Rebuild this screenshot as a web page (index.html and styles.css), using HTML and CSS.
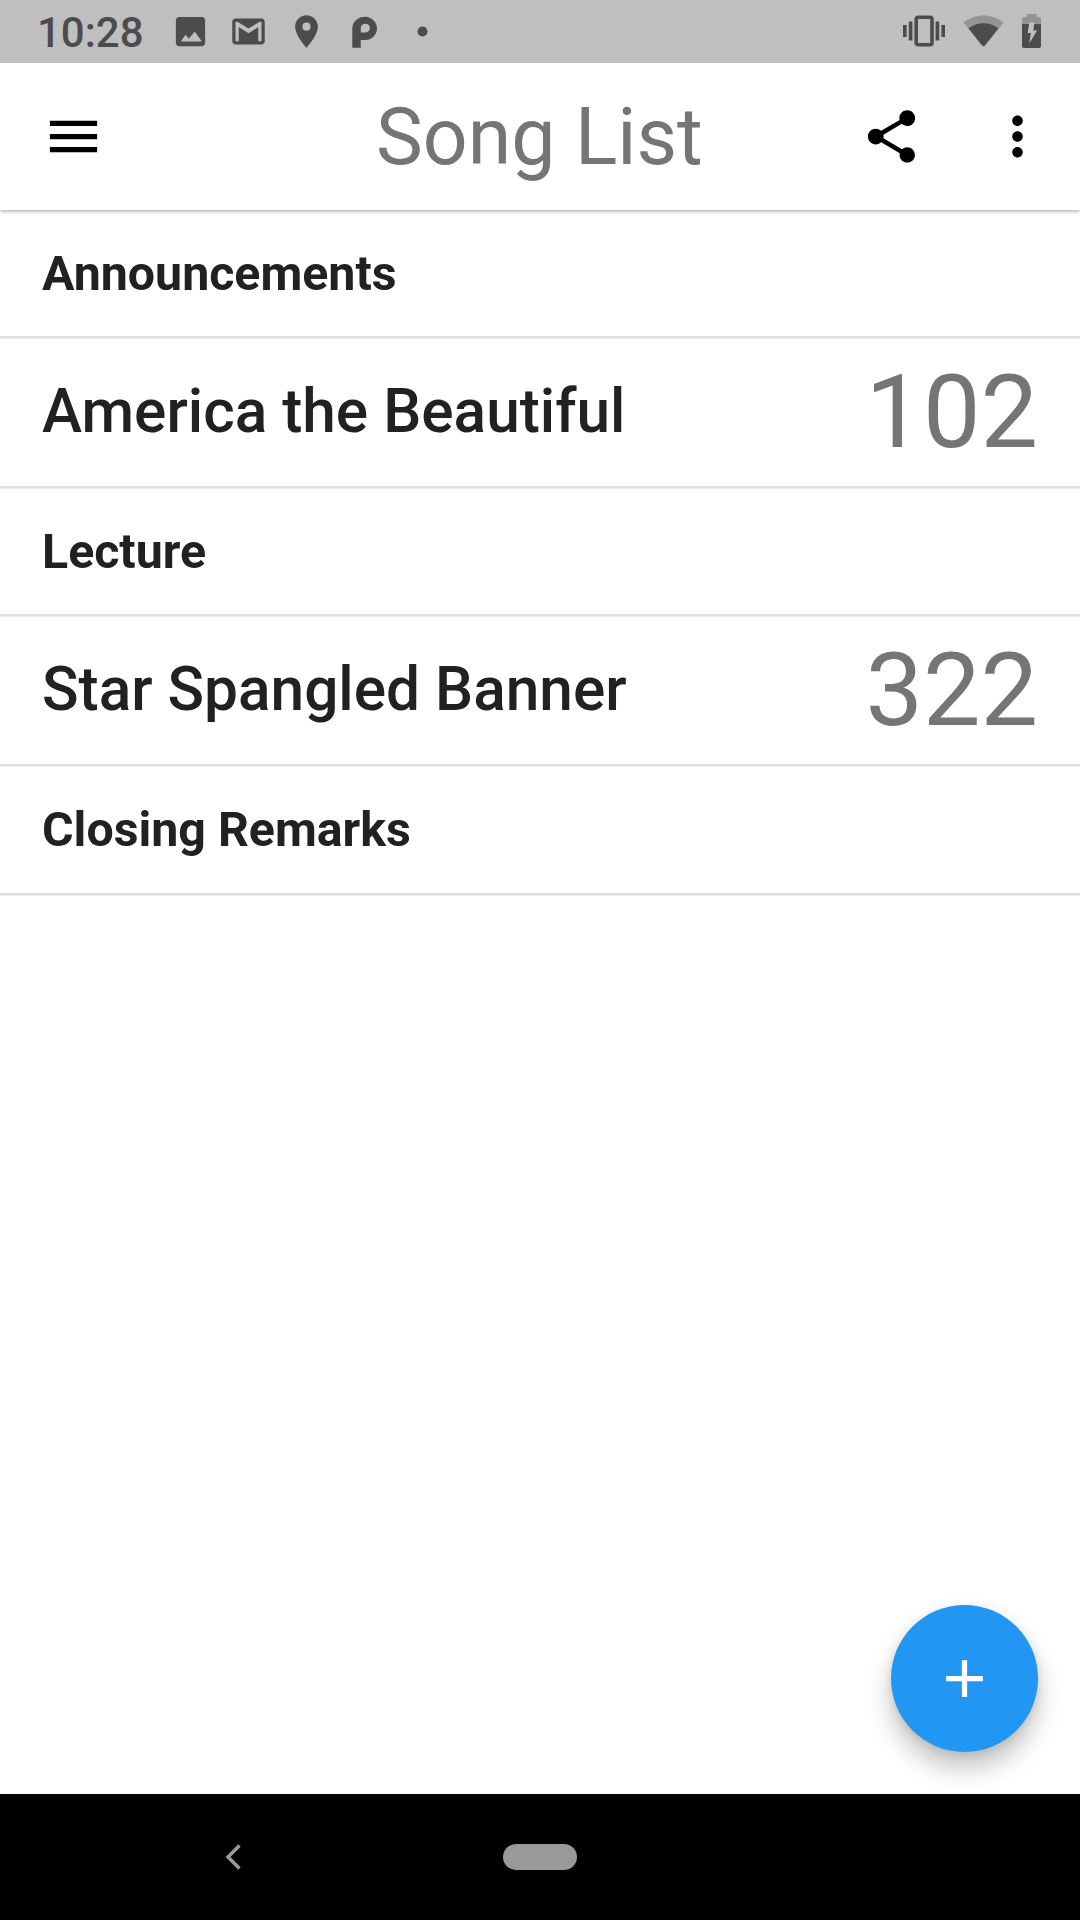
FILE: index.html
```html
<!DOCTYPE html>
<html lang="en">

<head>
    <meta charset="utf-8">
    <title>Song List</title>
    <link rel="stylesheet" href="styles.css">
</head>

<body>
    <div class="screen">
        <div class="status">
            <div class="clock">10:28</div>
            <div class="notifications">
                <svg class="icon" viewBox="0 0 24 24"><path d="M21 19V5c0-1.1-.9-2-2-2H5c-1.100 0-2 .9-2 2v14c0 1.100.9 2 2 2h14c1.100 0 2-.9 2-2zM6 18.200l3-4.200 1.900 2.400L14.600 12 19 18.200z" /></svg>
                <svg class="icon" viewBox="0 0 24 24"><path d="M20 4H4c-1.100 0-2 .9-2 2v12c0 1.100.9 2 2 2h16c1.100 0 2-.9 2-2V6c0-1.100-.9-2-2-2zm0 14h-2V9.200l-6 3.800-6-3.800V18H4V6h1.200l6.800 4.200L18.800 6H20z" /></svg>
                <svg class="icon" viewBox="0 0 24 24"><path d="M12 2C8.130 2 5 5.130 5 9c0 5.250 7 13 7 13s7-7.750 7-13c0-3.870-3.130-7-7-7zm0 9.500a2.500 2.500 0 0 1 0-5 2.500 2.500 0 0 1 0 5z" /></svg>
                <svg class="icon" viewBox="0 0 24 24"><path fill-rule="evenodd" d="M4.500 22V9.600A7.600 7.200 0 1 1 12.500 17.300H9.700V22zM9.700 12.600h2.700a2.800 2.700 0 1 0-2.700-2.700z" /></svg>
                <svg class="icon" viewBox="0 0 24 24"><circle cx="12" cy="12" r="3.100" /></svg>
            </div>
            <div class="system">
                <svg class="vibrate" viewBox="0 0 42 32"><path d="M0 10h3.600v12H0zM5.800 6.500h3.600v19H5.800zM32.600 6.500h3.600v19h-3.600zM38.400 10H42v12h-3.600z" /><rect class="line" x="13.200" y="2.200" width="15.800" height="27.600" rx="2" /></svg>
                <svg class="wifi" viewBox="0 0 41 32"><path class="faint" d="M.5 7.500C12-2 29-2 40.500 7.500L34.500 15C26 7 15 7 6.500 15z" /><path d="M5.500 13.500C14 6.500 27 6.500 35.500 13.500L22 30.500Q20.500 32 19 30.500z" /></svg>
                <svg class="battery" viewBox="0 0 19 34"><path class="faint" d="M0 10V4.500Q0 3 1.500 3H4.700V0h10v3h2.800Q19 3 19 4.500V10z" /><path d="M0 10h19v22q0 2-2 2H2q-2 0-2-2z" /><path class="bolt" d="M7.300 8.500h5.200l-1.200 8H15L7.300 29.600 8.800 19H5.700z" /></svg>
            </div>
        </div>
        <div class="appbar">
            <svg class="action" viewBox="0 0 24 24"><path d="M3 18h18v-2H3v2zm0-5h18v-2H3v2zm0-7v2h18V6H3z" /></svg>
            <div class="title">Song List</div>
            <svg class="action" viewBox="0 0 24 24"><path d="M18 16.080c-.76 0-1.440.3-1.960.77L8.910 12.700c.05-.23.09-.46.09-.7s-.04-.47-.09-.7l7.050-4.110c.54.5 1.250.81 2.040.81 1.660 0 3-1.340 3-3s-1.340-3-3-3-3 1.340-3 3c0 .24.04.47.09.7L8.040 9.810C7.500 9.310 6.790 9 6 9c-1.660 0-3 1.340-3 3s1.340 3 3 3c.79 0 1.500-.31 2.040-.81l7.120 4.160c-.05.21-.08.43-.08.65 0 1.610 1.310 2.920 2.920 2.920s2.920-1.310 2.920-2.920-1.310-2.920-2.920-2.920z" /></svg>
            <svg class="action" viewBox="0 0 24 24"><path d="M12 8c1.100 0 2-.9 2-2s-.9-2-2-2-2 .9-2 2 .9 2 2 2zm0 2c-1.100 0-2 .9-2 2s.9 2 2 2 2-.9 2-2-.9-2-2-2zm0 6c-1.100 0-2 .9-2 2s.9 2 2 2 2-.9 2-2-.9-2-2-2z" /></svg>
        </div>
        <div class="list">
            <div class="row heading">Announcements</div>
            <div class="row song">
                <div class="name">America the Beautiful</div>
                <div class="number">102</div>
            </div>
            <div class="row heading">Lecture</div>
            <div class="row song">
                <div class="name">Star Spangled Banner</div>
                <div class="number">322</div>
            </div>
            <div class="row heading">Closing Remarks</div>
        </div>
        <div class="add">
            <svg class="plus" viewBox="0 0 24 24"><path d="M19 13h-6v6h-2v-6H5v-2h6V5h2v6h6v2z" /></svg>
        </div>
        <div class="navbar">
            <svg class="back" viewBox="0 0 16 26"><path d="M14.500 1.500L3 13l11.500 11.500" /></svg>
            <div class="home"></div>
        </div>
    </div>
</body>

</html>
```
FILE: styles.css
```css
body {
    margin: 0;
    font-family: Roboto, sans-serif;
    background-color: #fff;
}

.screen {
    display: flex;
    flex-direction: column;
    position: relative;
    width: 1080px;
    height: 1920px;
    overflow: hidden;
}

.status {
    display: flex;
    align-items: center;
    box-sizing: border-box;
    height: 63px;
    padding: 0 39px 1px 37px;
    background-color: #bfbfbf;
    color: #4c4c4c;
    fill: #4c4c4c;
    z-index: 2;
}

.clock {
    width: 134px;
    font-size: 42px;
    font-weight: 500;
    line-height: 62px;
    padding-top: 3px;
}

.notifications {
    display: flex;
    gap: 19px;
}

.icon {
    width: 39px;
    height: 39px;
}

.system {
    display: flex;
    align-items: center;
    margin-left: auto;
}

.vibrate {
    width: 42px;
    height: 32px;
    margin-right: 18px;
}

.vibrate .line {
    fill: none;
    stroke: #4c4c4c;
    stroke-width: 3.600;
}

.wifi {
    width: 41px;
    height: 32px;
    margin-right: 18px;
}

.battery {
    width: 19px;
    height: 34px;
}

.faint {
    fill: #949494;
}

.bolt {
    fill: #bfbfbf;
}

.appbar {
    display: flex;
    align-items: center;
    height: 147px;
    padding: 0 31.500px 0 42px;
    background-color: #fff;
    box-shadow: 0 1px 4px rgba(0, 0, 0, .4);
    z-index: 1;
}

.action {
    width: 63px;
    height: 63px;
}

.action:last-child {
    margin-left: 63px;
}

.title {
    flex: 1;
    font-size: 78.750px;
    color: #757575;
    padding-left: 271px;
}

.list {
    flex: 1;
}

.row {
    display: flex;
    align-items: center;
    padding: 0 42px;
    color: #212121;
    border-bottom: 2px solid #dfdfdf;
    box-shadow: 0 1px #ececec;
}

.heading {
    height: 126px;
    font-size: 48.300px;
    font-weight: 700;
}

.heading:last-child {
    height: 127px;
}

.song {
    height: 148px;
    justify-content: space-between;
}

.name {
    font-size: 60.375px;
    font-weight: 500;
    padding-bottom: 1px;
}

.number {
    font-size: 102.375px;
    color: #757575;
}

.add {
    position: absolute;
    right: 42px;
    bottom: 168px;
    display: flex;
    align-items: center;
    justify-content: center;
    width: 147px;
    height: 147px;
    border-radius: 50%;
    background-color: #2196f3;
    box-shadow: 0 16px 26px rgba(0, 0, 0, .24), 0 2px 8px rgba(0, 0, 0, .1);
}

.plus {
    width: 63px;
    height: 63px;
    fill: #fff;
}

.navbar {
    display: flex;
    align-items: center;
    height: 126px;
    background-color: #000;
}

.back {
    width: 16px;
    height: 26px;
    margin-left: 225px;
    fill: none;
    stroke: #999;
    stroke-width: 3.500;
}

.home {
    width: 74px;
    height: 26px;
    margin-left: 262px;
    border-radius: 13px;
    background-color: #999;
}
```
